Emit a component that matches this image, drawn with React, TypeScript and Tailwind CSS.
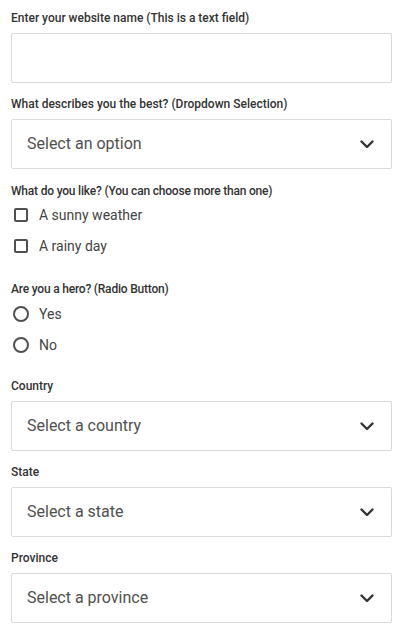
import React from "react";

const Chevron = () => (
  <svg width="14" height="9" viewBox="0 0 14 9" fill="none" className="shrink-0">
    <path d="M1.5 1.5 L7 7 L12.5 1.5" stroke="#333" strokeWidth="2.4" strokeLinecap="round" strokeLinejoin="round" />
  </svg>
);

const Label: React.FC<{ children: React.ReactNode; tight?: boolean }> = ({ children, tight }) => (
  <div className={`text-[12px] leading-[16px] font-medium text-[#333] mb-[7px] ${tight ? "tracking-[-0.2px]" : ""}`}>
    {children}
  </div>
);

const SelectBox: React.FC<{ placeholder: string }> = ({ placeholder }) => (
  <div className="h-[50px] border border-[#d9d9d9] rounded-[2px] bg-white flex items-center justify-between pl-[15px] pr-[17px]">
    <span className="text-[16px] text-[#505050]">{placeholder}</span>
    <Chevron />
  </div>
);

const Checkbox: React.FC<{ label: string }> = ({ label }) => (
  <div className="flex items-center h-[20px]">
    <span className="ml-[3px] w-[14px] h-[14px] border-2 border-[#505050] rounded-[2px]" />
    <span className="ml-[11px] text-[14px] text-[#444]">{label}</span>
  </div>
);

const Radio: React.FC<{ label: string }> = ({ label }) => (
  <div className="flex items-center h-[20px]">
    <span className="ml-[2px] w-[16px] h-[16px] border-2 border-[#505050] rounded-full" />
    <span className="ml-[10px] text-[14px] text-[#444]">{label}</span>
  </div>
);

export default function App() {
  return (
    <div className="bg-white pl-[11px] pr-[10px] pt-[10px] w-[402px]" style={{ fontFamily: "Roboto, sans-serif" }}>
      <Label>Enter your website name (This is a text field)</Label>
      <input className="block w-full h-[50px] border border-[#d9d9d9] rounded-[2px] outline-none px-[15px] text-[16px]" />

      <div className="mt-[13px]">
        <Label>What describes you the best? (Dropdown Selection)</Label>
        <SelectBox placeholder="Select an option" />
      </div>

      <div className="mt-[14px]">
        <Label tight>What do you like? (You can choose more than one)</Label>
        <div className="flex flex-col gap-[11px] -mt-[1px]">
          <Checkbox label="A sunny weather" />
          <Checkbox label="A rainy day" />
        </div>
      </div>

      <div className="mt-[25px]">
        <Label tight>Are you a hero? (Radio Button)</Label>
        <div className="flex flex-col gap-[11px]">
          <Radio label="Yes" />
          <Radio label="No" />
        </div>
      </div>

      <div className="mt-[23px]">
        <Label>Country</Label>
        <SelectBox placeholder="Select a country" />
      </div>
      <div className="mt-[13px]">
        <Label>State</Label>
        <SelectBox placeholder="Select a state" />
      </div>
      <div className="mt-[13px]">
        <Label>Province</Label>
        <SelectBox placeholder="Select a province" />
      </div>
    </div>
  );
}
